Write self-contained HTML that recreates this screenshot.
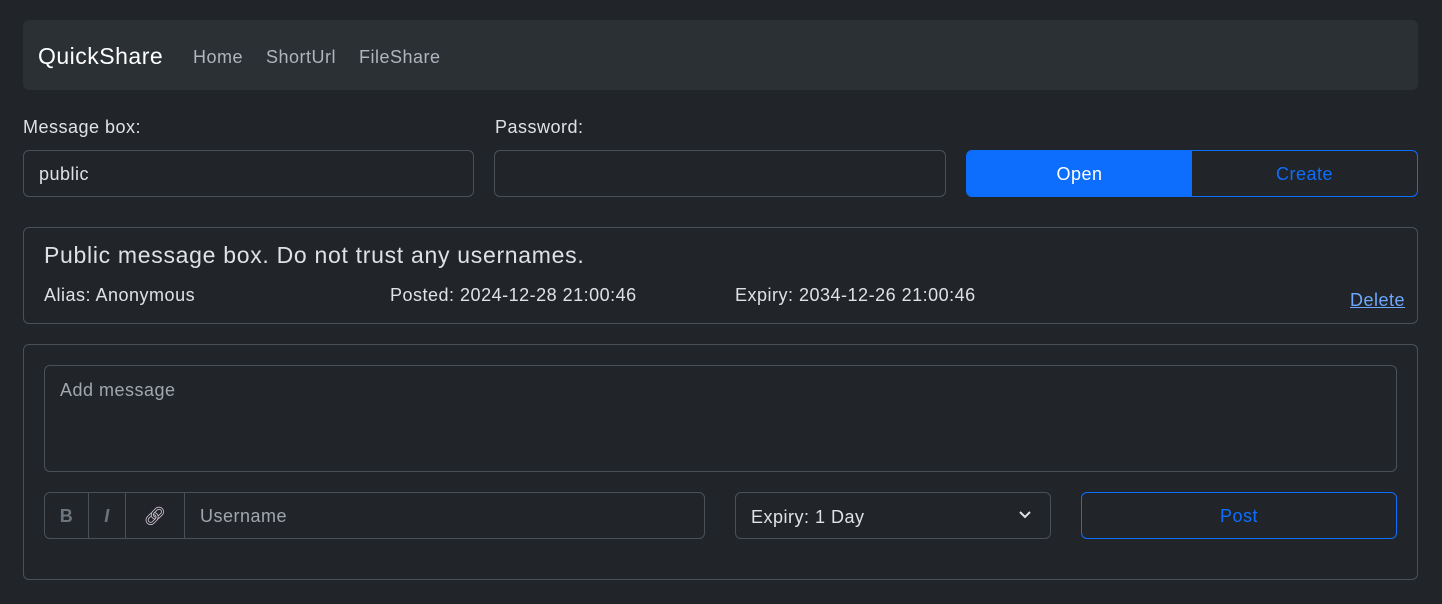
<!DOCTYPE html><html><head><style>
body{margin:0;background:#212529;font-family:"Liberation Sans",sans-serif;color:#dee2e6;width:1442px;height:604px;position:relative;overflow:hidden;font-size:18px;letter-spacing:0.5px}
.a{position:absolute;box-sizing:border-box}
.bx{border:1px solid #495057;border-radius:6px}
</style></head><body>
<div class="a" style="left:23px;top:20px;width:1395px;height:70px;background:#2b3035;border-radius:6px"></div>
<div class="a" style="left:38px;top:43px;font-size:23px;color:#fff">QuickShare</div>
<div class="a" style="left:193px;top:47px;color:#adb5bd">Home</div>
<div class="a" style="left:266px;top:47px;color:#adb5bd">ShortUrl</div>
<div class="a" style="left:359px;top:47px;color:#adb5bd">FileShare</div>
<div class="a" style="left:23px;top:117px">Message box:</div>
<div class="a" style="left:495px;top:117px">Password:</div>
<div class="a bx" style="left:23px;top:150px;width:451px;height:47px;padding:13px 15px">public</div>
<div class="a bx" style="left:494px;top:150px;width:452px;height:47px"></div>
<div class="a" style="left:966px;top:150px;width:452px;height:47px;border:1px solid #0d6efd;border-radius:6px;display:flex;overflow:hidden">
<div style="flex:1;background:#0d6efd;color:#fff;text-align:center;line-height:47px">Open</div>
<div style="flex:1;color:#0d6efd;text-align:center;line-height:47px">Create</div></div>
<div class="a bx" style="left:23px;top:227px;width:1395px;height:97px"></div>
<div class="a" style="left:44px;top:242px;font-size:23px;letter-spacing:0.7px">Public message box. Do not trust any usernames.</div>
<div class="a" style="left:44px;top:285px">Alias: Anonymous</div>
<div class="a" style="left:390px;top:285px">Posted: 2024-12-28 21:00:46</div>
<div class="a" style="left:735px;top:285px">Expiry: 2034-12-26 21:00:46</div>
<div class="a" style="left:1350px;top:290px;color:#6ea8fe;text-decoration:underline">Delete</div>
<div class="a bx" style="left:23px;top:344px;width:1395px;height:236px"></div>
<div class="a bx" style="left:44px;top:365px;width:1353px;height:107px;padding:14px 15px;color:#a1a7ad">Add message</div>
<div class="a bx" style="left:44px;top:492px;width:661px;height:47px;display:flex;color:#6c757d">
<div style="width:43px;border-right:1px solid #495057;text-align:center;line-height:47px;font-weight:bold">B</div>
<div style="width:36px;border-right:1px solid #495057;text-align:center;line-height:47px;font-weight:bold;font-style:italic">I</div>
<div style="width:58px;border-right:1px solid #495057;text-align:center;line-height:47px;color:#e0d0e0">🔗︎</div>
<div style="padding-left:15px;line-height:47px;color:#a1a7ad">Username</div></div>
<div class="a bx" style="left:735px;top:492px;width:316px;height:47px;padding:14px 15px">Expiry: 1 Day
<svg style="position:absolute;right:18px;top:17px" width="14" height="10" viewBox="0 0 14 10"><path d="M2 2l5 5 5-5" stroke="#dee2e6" stroke-width="2" fill="none"/></svg></div>
<div class="a" style="left:1081px;top:492px;width:316px;height:47px;border:1px solid #0d6efd;border-radius:6px;color:#0d6efd;text-align:center;line-height:47px">Post</div>
</body></html>
